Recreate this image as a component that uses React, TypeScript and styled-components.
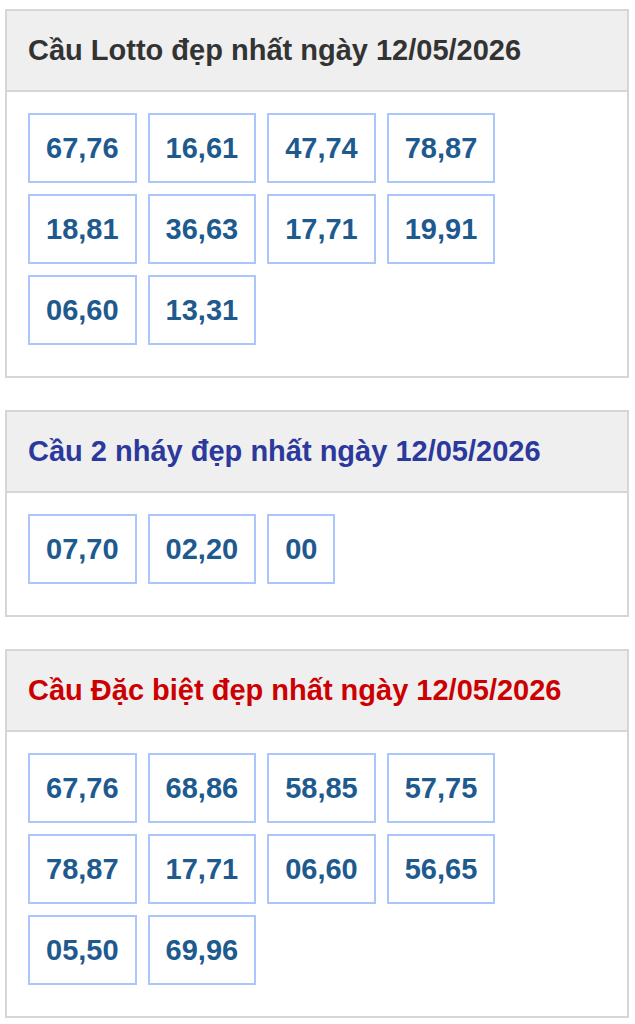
import React from 'react';
import styled, { createGlobalStyle } from 'styled-components';

const GlobalStyle = createGlobalStyle`
  body {
    margin: 0;
    background: #fff;
    font-family: "Liberation Sans", Arial, sans-serif;
  }
`;

const Page = styled.div`
  display: flex;
  flex-direction: column;
  gap: 32px;
  padding: 9px 6px 0 5px;
`;

const Panel = styled.section`
  border: 2px solid #d6d6d6;
  background: #fff;
`;

const Header = styled.div`
  background: #efefef;
  border-bottom: 2px solid #d6d6d6;
  height: 79px;
  display: flex;
  align-items: center;
  padding: 0 21px;
`;

const Title = styled.h2<{ $color: string }>`
  margin: 0;
  font-size: 29px;
  font-weight: 700;
  color: ${(p) => p.$color};
`;

const Body = styled.div`
  display: flex;
  flex-wrap: wrap;
  gap: 11px;
  padding: 21px 21px 31px;
`;

const NumBox = styled.div`
  height: 66px;
  padding: 0 16px;
  border: 2px solid #abc6fc;
  display: flex;
  align-items: center;
  justify-content: center;
  font-size: 29px;
  font-weight: 700;
  color: #1e5a8e;
`;

interface Section {
  title: string
  color: string
  numbers: string[]
}

const sections: Section[] = [
  {
    title: 'Cầu Lotto đẹp nhất ngày 12/05/2026',
    color: '#333',
    numbers: ['67,76', '16,61', '47,74', '78,87', '18,81', '36,63', '17,71', '19,91', '06,60', '13,31'],
  },
  {
    title: 'Cầu 2 nháy đẹp nhất ngày 12/05/2026',
    color: '#2b399d',
    numbers: ['07,70', '02,20', '00'],
  },
  {
    title: 'Cầu Đặc biệt đẹp nhất ngày 12/05/2026',
    color: '#cc0000',
    numbers: ['67,76', '68,86', '58,85', '57,75', '78,87', '17,71', '06,60', '56,65', '05,50', '69,96'],
  },
];

const App = () => (
  <>
    <GlobalStyle />
    <Page>
      {sections.map((s) => (
        <Panel key={s.title}>
          <Header>
            <Title $color={s.color}>{s.title}</Title>
          </Header>
          <Body>
            {s.numbers.map((n) => (
              <NumBox key={n}>{n}</NumBox>
            ))}
          </Body>
        </Panel>
      ))}
    </Page>
  </>
);

export default App;
